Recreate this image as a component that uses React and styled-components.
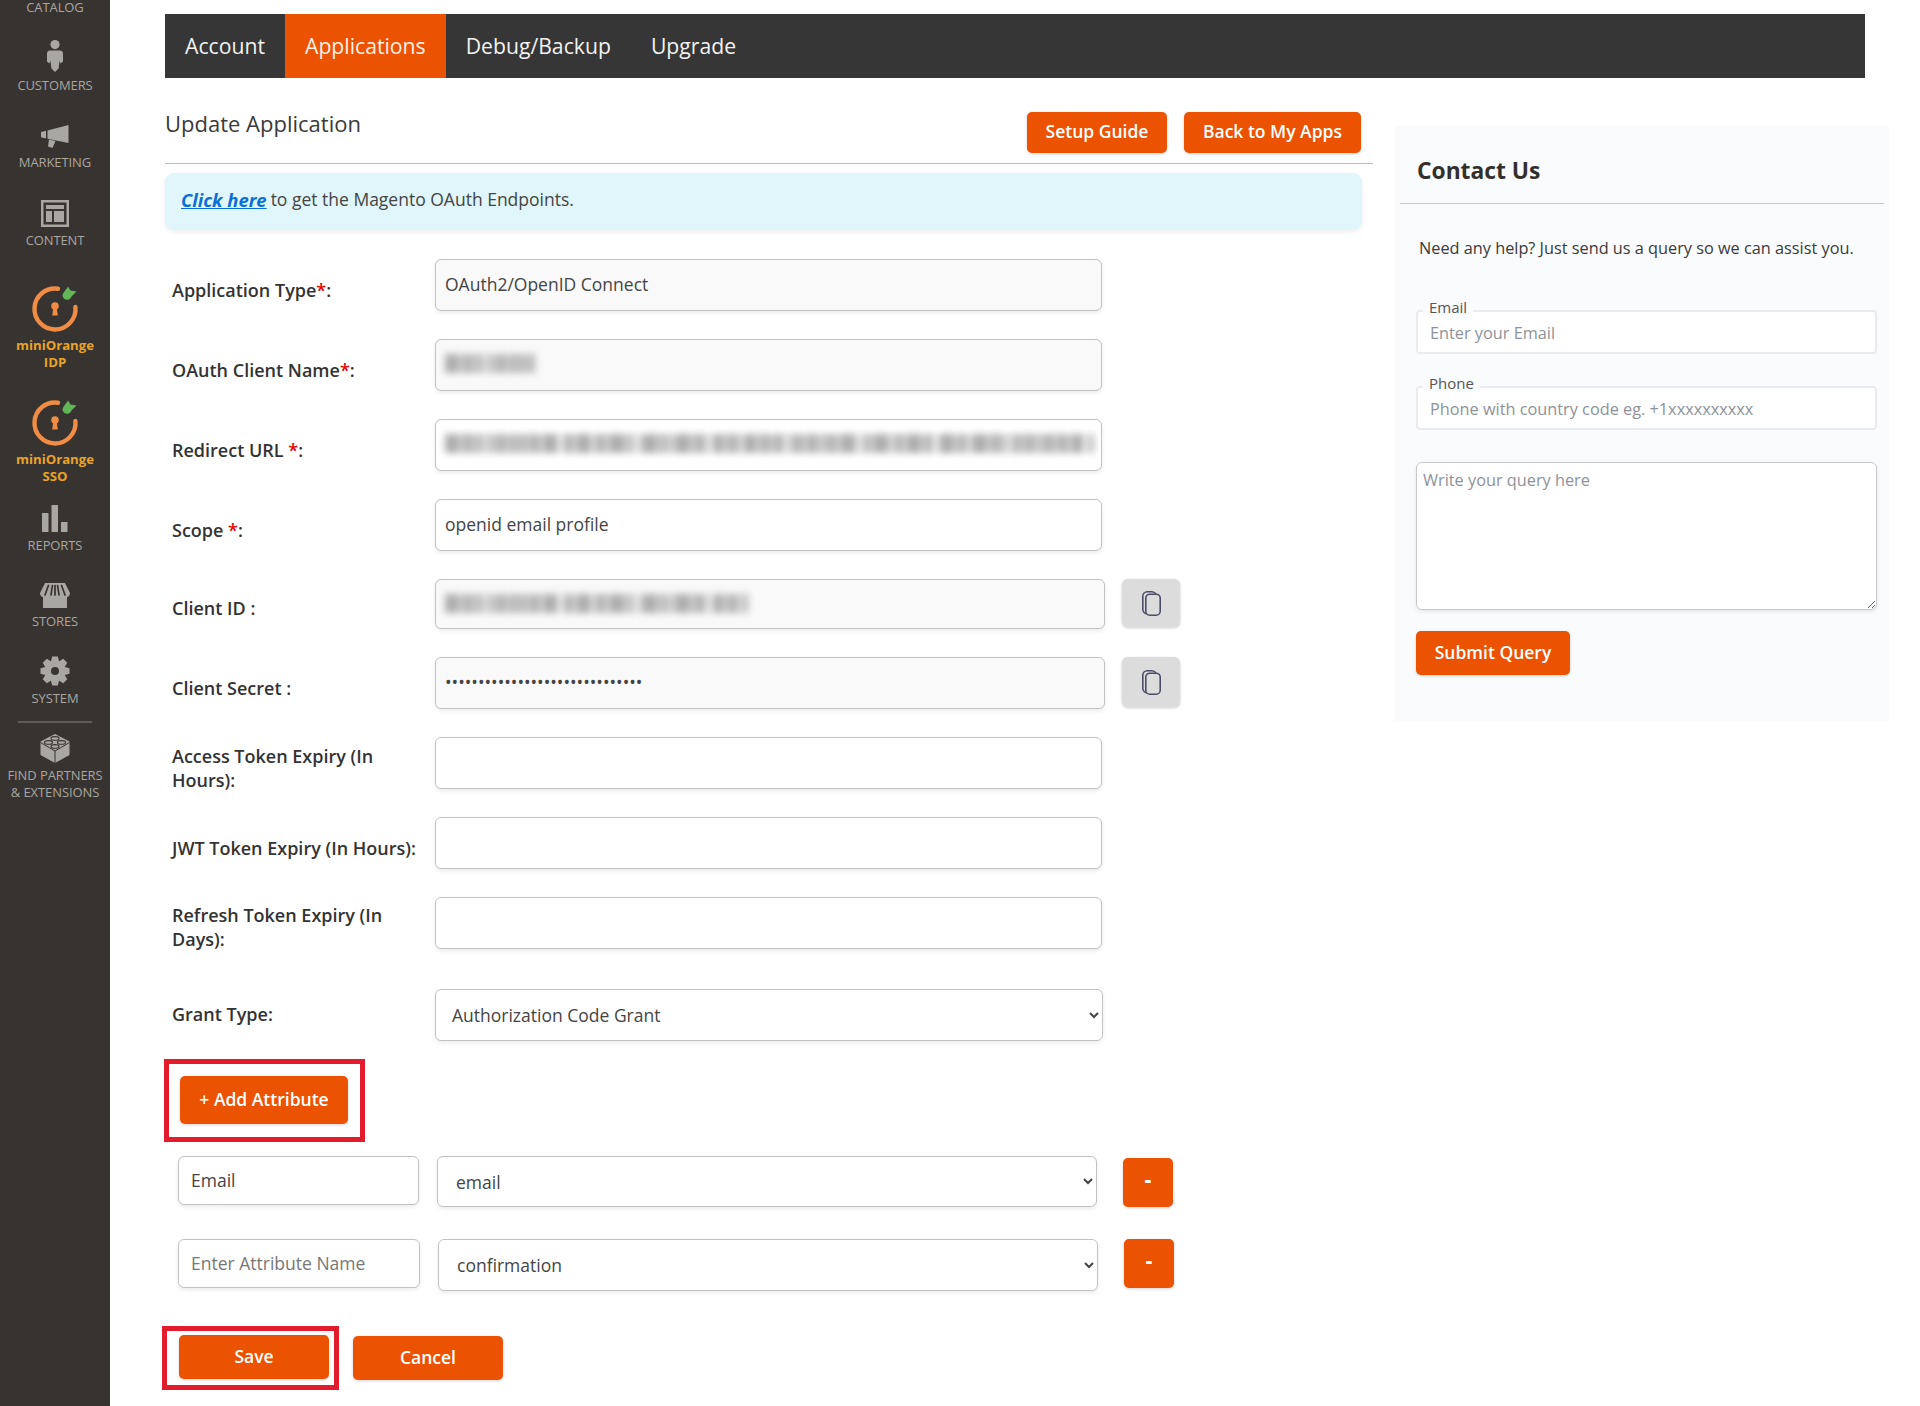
import React from "react";
import styled, { createGlobalStyle } from "styled-components";

const Global = createGlobalStyle`
  html, body { margin: 0; padding: 0; background: #fff; }
  body { font-family: "Open Sans", "Noto Sans", sans-serif; color: #333; overflow: hidden; }
  * { box-sizing: border-box; }
`;

const Page = styled.div`
  display: flex;
  min-height: 1406px;
`;

const Sidebar = styled.nav`
  width: 110px;
  flex: none;
  background: #373330;
  display: flex;
  flex-direction: column;
  align-items: center;
`;

const SideItem = styled.a`
  display: flex;
  flex-direction: column;
  align-items: center;
  margin-top: ${(p) => p.$top}px;
  gap: ${(p) => p.$gap}px;
  svg { display: block; }
`;

const SideLabel = styled.span`
  font-size: 13px;
  line-height: 14px;
  letter-spacing: -0.1px;
  color: #aaa6a0;
  text-transform: uppercase;
  text-align: center;
  white-space: nowrap;
`;

const FindLabel = styled(SideLabel)`
  line-height: 17px;
`;

const BrandLabel = styled.span`
  font-size: 13.2px;
  line-height: 17px;
  font-weight: 700;
  color: #e9a327;
  text-align: center;
  white-space: nowrap;
`;

const SideRule = styled.div`
  width: 74px;
  height: 2px;
  background: #5f5b57;
  margin-top: 16px;
`;

const Main = styled.main`
  flex: 1;
  min-width: 0;
  padding: 14px 0 0 55px;
`;

const TopNav = styled.div`
  width: 1700px;
  height: 64px;
  background: #363636;
  display: flex;
`;

const TopTab = styled.a`
  display: flex;
  align-items: center;
  padding: 0 20px 2px;
  font-size: 21.2px;
  color: ${(p) => (p.$active ? "#fdf0e6" : "#f2f2f2")};
  background: ${(p) => (p.$active ? "#eb5202" : "transparent")};
`;

const Columns = styled.div`
  display: flex;
  align-items: flex-start;
`;

const LeftCol = styled.section`
  width: 1208px;
  flex: none;
`;

const HeaderRow = styled.div`
  display: flex;
  align-items: flex-start;
  justify-content: space-between;
  margin-top: 34px;
  padding: 0 12px 10px 0;
  border-bottom: 1px solid #bdbdbd;
`;

const Title = styled.h1`
  margin: -1px 0 0;
  font-size: 22px;
  line-height: 24px;
  font-weight: 500;
  color: #3a3a3a;
`;

const HeaderButtons = styled.div`
  display: flex;
  gap: 17px;
`;

const OrangeButton = styled.button`
  border: 0;
  border-radius: 5px;
  background: #eb5202;
  color: #fff;
  font-family: inherit;
  font-weight: 600;
  font-size: ${(p) => p.$size || 17.5}px;
  width: ${(p) => p.$w}px;
  height: ${(p) => p.$h}px;
  padding: 0 0 3px;
  flex: none;
  box-shadow: 0 1px 3px rgba(0, 0, 0, 0.18);
`;

const Alert = styled.div`
  width: 1197px;
  height: 57px;
  margin-top: 9px;
  padding: 0 16px 5px;
  display: flex;
  align-items: center;
  gap: 4px;
  background: #e0f6fa;
  border-radius: 9px;
  box-shadow: 0 2px 5px rgba(0, 0, 0, 0.07);
  font-size: 17.5px;
  color: #444;
`;

const AlertLink = styled.a`
  color: #0a6ed8;
  font-size: 18.4px;
  font-weight: 700;
  font-style: italic;
  text-decoration: underline;
`;

const Form = styled.div`
  display: flex;
  flex-direction: column;
  gap: 28px;
  margin-top: 29px;
`;

const Row = styled.div`
  display: flex;
  align-items: flex-start;
  height: ${(p) => p.$h || 52}px;
  padding-left: 7px;
  margin-top: ${(p) => p.$mt || 0}px;
`;

const Label = styled.label`
  width: 263px;
  flex: none;
  padding-top: ${(p) => p.$pt ?? 19}px;
  padding-right: 8px;
  font-size: 18px;
  line-height: 24px;
  font-weight: 600;
  color: #333;
`;

const Star = styled.span`
  color: #e60000;
`;

const fieldCss = `
  border: 1px solid #c2c2c2;
  border-radius: 6px;
  font-family: inherit;
  font-size: 17.5px;
  color: #444;
  box-shadow: 0 2px 4px rgba(0, 0, 0, 0.08);
  outline: none;
`;

const Input = styled.input`
  ${fieldCss}
  width: ${(p) => p.$w || 667}px;
  height: ${(p) => p.$h || 52}px;
  padding: 0 9px 3px;
  flex: none;
  background: ${(p) => (p.$muted ? "#f9f9f9" : "#fff")};
  &::placeholder { color: #777; opacity: 1; }
`;

const RedactedBox = styled.div`
  ${fieldCss}
  width: ${(p) => p.$w || 667}px;
  height: ${(p) => p.$h || 52}px;
  flex: none;
  padding: 14px 9px 0;
  overflow: hidden;
  background: ${(p) => (p.$muted ? "#f9f9f9" : "#fff")};
`;

const Redaction = styled.div`
  width: ${(p) => p.$w}px;
  height: 19px;
  filter: blur(3.5px);
  background:
    repeating-linear-gradient(90deg, transparent 0 37px, rgba(255, 255, 255, 0.6) 37px 44px, transparent 44px 71px, rgba(255, 255, 255, 0.45) 71px 75px),
    repeating-linear-gradient(90deg, #aeaeae 0 13px, #cdcdcd 13px 18px, #b8b8b8 18px 29px, #d6d6d6 29px 33px);
`;

const CopyButton = styled.button`
  width: 58px;
  height: ${(p) => p.$h}px;
  flex: none;
  margin-left: 17px;
  padding: 0;
  border: 0;
  border-radius: 6px;
  background: #dcdcdc;
  box-shadow: 0 1px 3px rgba(0, 0, 0, 0.2);
  display: flex;
  align-items: center;
  justify-content: center;
`;

const Select = styled.select`
  ${fieldCss}
  width: ${(p) => p.$w}px;
  height: ${(p) => p.$h}px;
  flex: none;
  padding: 0 ${(p) => p.$pl}px;
  background: #fff;
`;

const RedBox = styled.div`
  display: inline-flex;
  border: 5px solid #e31c2d;
  margin-left: ${(p) => p.$ml}px;
  margin-top: ${(p) => p.$mt || 0}px;
  padding: ${(p) => p.$pad};
  flex: none;
`;

const AttrList = styled.div`
  display: flex;
  flex-direction: column;
  gap: 32px;
  margin: 14px 0 0 13px;
`;

const AttrRow = styled.div`
  display: flex;
  align-items: flex-start;
`;

const AttrSelect = styled(Select)`
  margin-left: 18px;
`;

const AttrInput = styled(Input)`
  padding: 0 12px 1px;
`;

const MinusButton = styled(OrangeButton)`
  margin-left: 26px;
  margin-top: ${(p) => p.$mt}px;
  font-weight: 800;
  font-size: 20px;
  padding-bottom: 6px;
`;

const Actions = styled.div`
  display: flex;
  align-items: center;
  gap: 14px;
  margin-top: 35px;
`;

const Contact = styled.aside`
  width: 494px;
  flex: none;
  margin: 48px 0 0 22px;
  height: 595px;
  padding: 0 5px;
  background: #fafbfc;
`;

const ContactTitle = styled.h2`
  margin: 0;
  height: 78px;
  padding: 28px 0 0 17px;
  font-size: 22.8px;
  line-height: 34px;
  font-weight: 700;
  color: #33302c;
  border-bottom: 1px solid #c4c8cc;
`;

const ContactText = styled.p`
  margin: 32px 0 0 19px;
  font-size: 16.3px;
  line-height: 24px;
  color: #3a3a3a;
  white-space: nowrap;
`;

const FloatField = styled.div`
  position: relative;
  width: 461px;
  margin: ${(p) => p.$mt}px 0 0 16px;
`;

const FloatLabel = styled.span`
  position: absolute;
  left: 7px;
  top: -12px;
  padding: 0 6px;
  font-size: 15px;
  line-height: 18px;
  color: #555;
  background: #fafbfc;
`;

const ContactInput = styled.input`
  display: block;
  width: 100%;
  height: 44px;
  padding: 2px 12px 0;
  border: 2px solid #e9ebee;
  border-radius: 4px;
  background: #fff;
  font-family: inherit;
  font-size: 16.3px;
  outline: none;
  &::placeholder { color: #8d929a; opacity: 1; }
`;

const QueryBox = styled.textarea`
  display: block;
  width: 461px;
  height: 148px;
  margin: 32px 0 0 16px;
  padding: 6px 6px;
  border: 1px solid #c6c8cc;
  border-radius: 6px;
  background: #fff;
  box-shadow: 0 2px 4px rgba(0, 0, 0, 0.08);
  font-family: inherit;
  font-size: 16.3px;
  line-height: 22px;
  outline: none;
  &::placeholder { color: #8d929a; opacity: 1; }
`;

const SubmitWrap = styled.div`
  margin: 21px 0 0 16px;
`;

const Mark = ({ w, h, children }) => (
  <svg width={w} height={h} viewBox={`0 0 ${w} ${h}`} fill="#a9a7a2" aria-hidden="true">{children}</svg>
);

const OrangeLogo = () => (
  <svg width="56" height="48" viewBox="0 0 56 48" aria-hidden="true">
    <path d="M31 3.7 A20.5 20.5 0 1 0 48.4 22" fill="none" stroke="#f08c44" strokeWidth="4.4" strokeLinecap="round" />
    <circle cx="28" cy="21" r="3.8" fill="#f08c44" />
    <path d="M26.2 23 h3.6 l1 7.6 h-5.6 z" fill="#f08c44" />
    <path d="M35.5 11 C36 7 39 5 41 1.5 l2.5 4 6 1 -5 5 c-2 5 -8 4 -9 -0.5z" fill="#62b657" />
  </svg>
);

const CustomerIcon = () => (
  <Mark w={16} h={32}>
    <circle cx="8" cy="4.6" r="4.6" />
    <path d="M3 10.5 h10 c2 0 3 1.4 3 3 v8 l-2.4 2 -1 -3 -1 8 -3.6 3.5 -3.6 -3.5 -1 -8 -1 3 L0 21.5 v-8 c0-1.6 1-3 3-3z" />
  </Mark>
);

const MegaphoneIcon = () => (
  <Mark w={28} h={23}>
    <path d="M0 7 l5 -1.2 v7.6 l-5 -1.2z" />
    <path d="M6.5 5.4 L27.5 0 v18 L6.5 13.8z" />
    <path d="M8 14.5 l6.5 1.5 -3 7 -4.5 -1.5z" />
  </Mark>
);

const ContentIcon = () => (
  <Mark w={28} h={27}>
    <path fillRule="evenodd" d="M0 0 h28 v27 h-28z M2.5 2.5 v22 h23 v-22z" />
    <rect x="5" y="5" width="18" height="4" />
    <rect x="5" y="11" width="6" height="11" />
    <rect x="13" y="11" width="10" height="11" />
  </Mark>
);

const ReportsIcon = () => (
  <Mark w={26} h={27}>
    <rect x="0" y="8" width="6.5" height="19" />
    <rect x="9.5" y="0" width="6.5" height="27" />
    <rect x="19" y="17" width="6.5" height="10" />
  </Mark>
);

const StoresIcon = () => (
  <Mark w={30} h={25}>
    <path d="M5 0 H25 L30 10 c0 2.6-1.6 4-3 4 V25 H3 V14 C1.6 14 0 12.6 0 10z" />
    <path d="M8.4 2.5 L5 12 M12.4 2.5 L11 12 M15 2.5 V12 M17.6 2.5 L19 12 M21.6 2.5 L25 12" stroke="#373330" strokeWidth="1.7" strokeLinecap="round" fill="none" />
  </Mark>
);

const GearIcon = () => (
  <Mark w={30} h={30}>
    <g transform="translate(15 15)">
      {[0, 45, 90, 135, 180, 225, 270, 315].map((a) => (
        <path key={a} d="M-2.8 -14.5 H2.8 L4.5 -8 H-4.5z" transform={`rotate(${a})`} />
      ))}
      <circle r="7.3" fill="none" stroke="#a9a7a2" strokeWidth="6.6" />
    </g>
  </Mark>
);

const BrickIcon = () => (
  <Mark w={30} h={29}>
    <path d="M15 0 L29.5 7.5 V21 L15 29 0.5 21 V7.5z" />
    <path d="M0.5 8.5 L15 17 29.5 8.5 M15 17 V29" stroke="#373330" strokeWidth="1" fill="none" />
    <ellipse cx="15" cy="4.4" rx="4" ry="1.8" fill="none" stroke="#373330" strokeWidth="1.1" />
    <ellipse cx="8.5" cy="8.4" rx="4" ry="1.8" fill="none" stroke="#373330" strokeWidth="1.1" />
    <ellipse cx="21.5" cy="8.4" rx="4" ry="1.8" fill="none" stroke="#373330" strokeWidth="1.1" />
    <ellipse cx="15" cy="12.4" rx="4" ry="1.8" fill="none" stroke="#373330" strokeWidth="1.1" />
  </Mark>
);

const CopyIcon = () => (
  <svg width="19" height="25" viewBox="0 0 19 25" fill="none" stroke="#4b4d68" strokeWidth="1.6" aria-hidden="true">
    <rect x="0.8" y="0.8" width="13.5" height="22" rx="4.5" />
    <rect x="3.8" y="3.2" width="14.4" height="21" rx="4" fill="#dcdcdc" />
  </svg>
);

const sideItems = [
  { top: 26, gap: 6, icon: <CustomerIcon />, label: "Customers" },
  { top: 33, gap: 7, icon: <MegaphoneIcon />, label: "Marketing" },
  { top: 31, gap: 6, icon: <ContentIcon />, label: "Content" },
];
const lowerItems = [
  { top: 20, gap: 6, icon: <ReportsIcon />, label: "Reports" },
  { top: 31, gap: 6, icon: <StoresIcon />, label: "Stores" },
  { top: 28, gap: 5, icon: <GearIcon />, label: "System" },
];

const Brand = ({ top, name }) => (
  <SideItem $top={top} $gap={4}>
    <OrangeLogo />
    <BrandLabel>miniOrange<br />{name}</BrandLabel>
  </SideItem>
);

export default function App() {
  return (
    <Page>
      <Global />
      <Sidebar>
        <SideItem $top={0} $gap={0}><SideLabel>Catalog</SideLabel></SideItem>
        {sideItems.map((s) => (
          <SideItem key={s.label} $top={s.top} $gap={s.gap}>{s.icon}<SideLabel>{s.label}</SideLabel></SideItem>
        ))}
        <Brand top={38} name="IDP" />
        <Brand top={28} name="SSO" />
        {lowerItems.map((s) => (
          <SideItem key={s.label} $top={s.top} $gap={s.gap}>{s.icon}<SideLabel>{s.label}</SideLabel></SideItem>
        ))}
        <SideRule />
        <SideItem $top={11} $gap={4}>
          <BrickIcon />
          <FindLabel>Find Partners<br />&amp; Extensions</FindLabel>
        </SideItem>
      </Sidebar>
      <Main>
        <TopNav>
          <TopTab>Account</TopTab>
          <TopTab $active>Applications</TopTab>
          <TopTab>Debug/Backup</TopTab>
          <TopTab>Upgrade</TopTab>
        </TopNav>
        <Columns>
          <LeftCol>
            <HeaderRow>
              <Title>Update Application</Title>
              <HeaderButtons>
                <OrangeButton $w={140} $h={41}>Setup Guide</OrangeButton>
                <OrangeButton $w={177} $h={41}>Back to My Apps</OrangeButton>
              </HeaderButtons>
            </HeaderRow>
            <Alert><AlertLink>Click here</AlertLink> to get the Magento OAuth Endpoints.</Alert>
            <Form>
              <Row>
                <Label>Application Type<Star>*</Star>:</Label>
                <Input $muted readOnly value="OAuth2/OpenID Connect" />
              </Row>
              <Row>
                <Label>OAuth Client Name<Star>*</Star>:</Label>
                <RedactedBox $muted><Redaction $w={90} /></RedactedBox>
              </Row>
              <Row>
                <Label>Redirect URL <Star>*</Star>:</Label>
                <RedactedBox><Redaction $w={649} /></RedactedBox>
              </Row>
              <Row>
                <Label>Scope <Star>*</Star>:</Label>
                <Input readOnly value="openid email profile" />
              </Row>
              <Row $h={50}>
                <Label $pt={17}>Client ID :</Label>
                <RedactedBox $muted $w={670} $h={50}><Redaction $w={303} /></RedactedBox>
                <CopyButton $h={48}><CopyIcon /></CopyButton>
              </Row>
              <Row>
                <Label>Client Secret :</Label>
                <Input $muted $w={670} type="password" readOnly value="000000000000000000000000000000" />
                <CopyButton $h={50}><CopyIcon /></CopyButton>
              </Row>
              <Row>
                <Label $pt={7}>Access Token Expiry (In Hours):</Label>
                <Input readOnly value="" />
              </Row>
              <Row>
                <Label $pt={19}>JWT Token Expiry (In Hours):</Label>
                <Input readOnly value="" />
              </Row>
              <Row>
                <Label $pt={6}>Refresh Token Expiry (In Days):</Label>
                <Input readOnly value="" />
              </Row>
              <Row $mt={12}>
                <Label $pt={13}>Grant Type:</Label>
                <Select $w={668} $h={52} $pl={12} defaultValue="a"><option value="a">Authorization Code Grant</option></Select>
              </Row>
            </Form>
            <RedBox $ml={-1} $mt={18} $pad="12px 12px 13px 11px">
              <OrangeButton $w={168} $h={48}>+ Add Attribute</OrangeButton>
            </RedBox>
            <AttrList>
              <AttrRow>
                <AttrInput $w={241} $h={49} readOnly value="Email" />
                <AttrSelect $w={660} $h={51} $pl={14} defaultValue="email"><option value="email">email</option></AttrSelect>
                <MinusButton $w={50} $h={49} $mt={2}>-</MinusButton>
              </AttrRow>
              <AttrRow>
                <AttrInput $w={242} $h={49} placeholder="Enter Attribute Name" />
                <AttrSelect $w={660} $h={52} $pl={14} defaultValue="c"><option value="c">confirmation</option></AttrSelect>
                <MinusButton $w={50} $h={49} $mt={0}>-</MinusButton>
              </AttrRow>
            </AttrList>
            <Actions>
              <RedBox $ml={-3} $pad="4px 5px 6px 12px">
                <OrangeButton $w={150} $h={44}>Save</OrangeButton>
              </RedBox>
              <OrangeButton $w={150} $h={44}>Cancel</OrangeButton>
            </Actions>
          </LeftCol>
          <Contact>
            <ContactTitle>Contact Us</ContactTitle>
            <ContactText>Need any help? Just send us a query so we can assist you.</ContactText>
            <FloatField $mt={50}>
              <FloatLabel>Email</FloatLabel>
              <ContactInput placeholder="Enter your Email" />
            </FloatField>
            <FloatField $mt={32}>
              <FloatLabel>Phone</FloatLabel>
              <ContactInput placeholder="Phone with country code eg. +1xxxxxxxxxx" />
            </FloatField>
            <QueryBox placeholder="Write your query here" />
            <SubmitWrap><OrangeButton $w={154} $h={44}>Submit Query</OrangeButton></SubmitWrap>
          </Contact>
        </Columns>
      </Main>
    </Page>
  );
}
